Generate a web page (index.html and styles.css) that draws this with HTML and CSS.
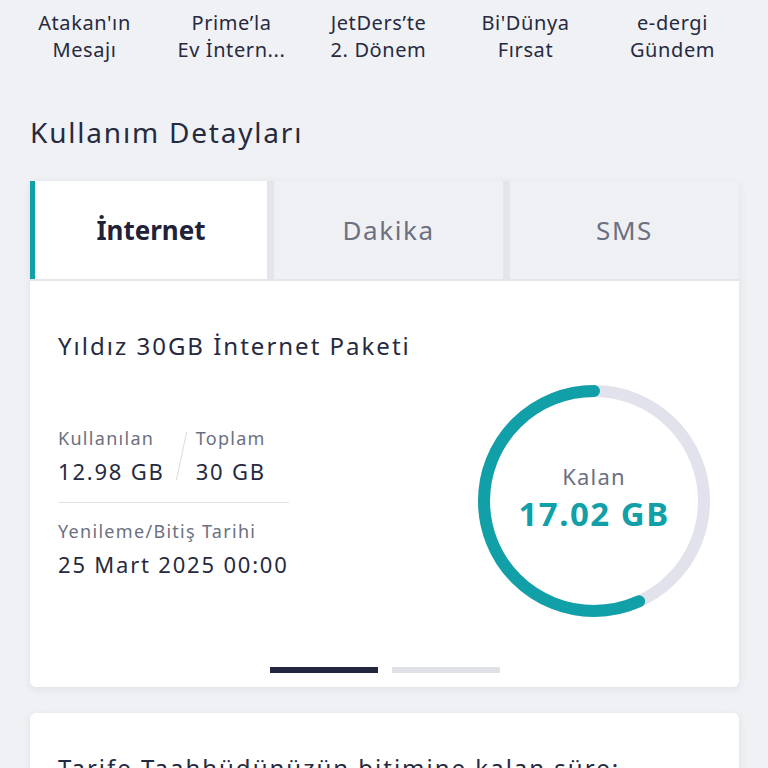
FILE: index.html
```html
<!DOCTYPE html>
<html lang="tr">
<head>
<meta charset="utf-8">
<link rel="stylesheet" href="styles.css">
</head>
<body>
<div class="shortcuts">
  <div class="shortcut">Atakan'ın<br>Mesajı</div>
  <div class="shortcut">Prime’la<br>Ev İntern...</div>
  <div class="shortcut">JetDers’te<br>2. Dönem</div>
  <div class="shortcut">Bi'Dünya<br>Fırsat</div>
  <div class="shortcut">e-dergi<br>Gündem</div>
  <div class="shortcut">Tarife<br>Ekle</div>
</div>

<h2 class="section-title">Kullanım Detayları</h2>

<div class="usage-card">
  <div class="tabs">
    <div class="tab active">İnternet</div>
    <div class="tab">Dakika</div>
    <div class="tab">SMS</div>
  </div>
  <div class="card-body">
    <div class="package-title">Yıldız 30GB İnternet Paketi</div>
    <div class="package-main">
      <div class="details">
        <div class="usage-row">
          <div class="stat">
            <div class="label">Kullanılan</div>
            <div class="value">12.98 GB</div>
          </div>
          <div class="slash"></div>
          <div class="stat">
            <div class="label">Toplam</div>
            <div class="value">30 GB</div>
          </div>
        </div>
        <div class="divider"></div>
        <div class="label">Yenileme/Bitiş Tarihi</div>
        <div class="value">25 Mart 2025 00:00</div>
      </div>
      <div class="donut">
        <svg width="244" height="244" viewBox="0 0 244 244">
          <circle cx="122" cy="122" r="110" fill="none" stroke="#e1e2eb" stroke-width="12"/>
          <circle cx="122" cy="122" r="110" fill="none" stroke="#11a0a8" stroke-width="12" stroke-linecap="round"
            stroke-dasharray="391.7 691.2" transform="rotate(-90 122 122) scale(1 -1) translate(0 -244)"/>
        </svg>
        <div class="donut-text">
          <div class="donut-label">Kalan</div>
          <div class="donut-value">17.02 GB</div>
        </div>
      </div>
    </div>
    <div class="pager">
      <span class="dot on"></span>
      <span class="dot"></span>
    </div>
  </div>
</div>

<div class="commit-card">
  <div class="commit-title">Tarife Taahhüdünüzün bitimine kalan süre:</div>
</div>
</body>
</html>
```
FILE: styles.css
```css
html, body {
  margin: 0;
  padding: 0;
  background: #f0f1f5;
  font-family: "Noto Sans", Lato, sans-serif;
  color: #262a40;
  overflow: hidden;
}
.shortcuts {
  display: flex;
  padding: 9px 0 0 11px;
  white-space: nowrap;
}
.shortcut {
  flex: 0 0 147px;
  text-align: center;
  font-size: 20px;
  line-height: 27px;
  letter-spacing: 0.6px;
  color: #262a40;
}
.section-title {
  margin: 49px 0 0 30px;
  font-size: 28px;
  font-weight: 400;
  line-height: 40px;
  letter-spacing: 1.8px;
  color: #262a40;
}
.usage-card {
  margin: 29px 29px 0 30px;
  box-shadow: 0 2px 8px rgba(30, 35, 60, 0.08);
  border-radius: 4px;
  background: #e4e5ea;
}
.tabs {
  display: grid;
  grid-template-columns: 237px 1fr 1fr;
  gap: 7px;
  padding-bottom: 2px;
}
.tab {
  height: 98px;
  display: flex;
  align-items: center;
  justify-content: center;
  background: #eff0f4;
  font-size: 26px;
  letter-spacing: 1.6px;
  color: #6c7080;
}
.tab.active {
  background: #fff;
  border-left: 5px solid #11a0a8;
  color: #1f2238;
  font-weight: 700;
  letter-spacing: 0;
}
.card-body {
  background: #fff;
  padding: 48px 28px 14px 28px;
  border-radius: 0 0 6px 6px;
}
.package-title {
  font-size: 24px;
  line-height: 34px;
  letter-spacing: 2px;
  color: #262a40;
}
.package-main {
  display: flex;
  justify-content: space-between;
  align-items: flex-start;
  margin-top: 7px;
}
.details {
  width: 231px;
  padding-top: 55px;
}
.usage-row {
  display: flex;
  align-items: flex-start;
}
.slash {
  width: 1px;
  height: 50px;
  background: #dcdde3;
  transform: rotate(12deg);
  margin: 6px 14px 0 16px;
}
.label {
  font-size: 18px;
  line-height: 26px;
  letter-spacing: 1.3px;
  margin-bottom: 2px;
  color: #6c7080;
}
.value {
  font-size: 22px;
  line-height: 36px;
  letter-spacing: 1.8px;
  color: #262a40;
}
.divider {
  height: 1px;
  background: #e2e3e8;
  margin: 13px 0 15px;
}
.donut {
  position: relative;
  width: 244px;
  height: 244px;
  margin: 9px -5px 0 0;
}
.donut svg {
  display: block;
}
.donut-text {
  position: absolute;
  inset: 0;
  display: flex;
  flex-direction: column;
  align-items: center;
  justify-content: center;
  padding-bottom: 4px;
}
.donut-label {
  font-size: 22px;
  line-height: 30px;
  letter-spacing: 1.2px;
  color: #6c7080;
}
.donut-value {
  font-size: 33px;
  line-height: 46px;
  font-weight: 700;
  letter-spacing: 1.5px;
  color: #11a0a8;
}
.pager {
  display: flex;
  justify-content: center;
  gap: 14px;
  margin-top: 44px;
}
.dot {
  width: 108px;
  height: 6px;
  background: #e0e1e6;
}
.dot.on {
  background: #23263f;
}
.commit-card {
  margin: 26px 29px 0 30px;
  background: #fff;
  border-radius: 6px;
  padding: 38px 28px 40px;
  box-shadow: 0 2px 8px rgba(30, 35, 60, 0.08);
}
.commit-title {
  font-size: 24px;
  line-height: 34px;
  letter-spacing: 2px;
}
```
